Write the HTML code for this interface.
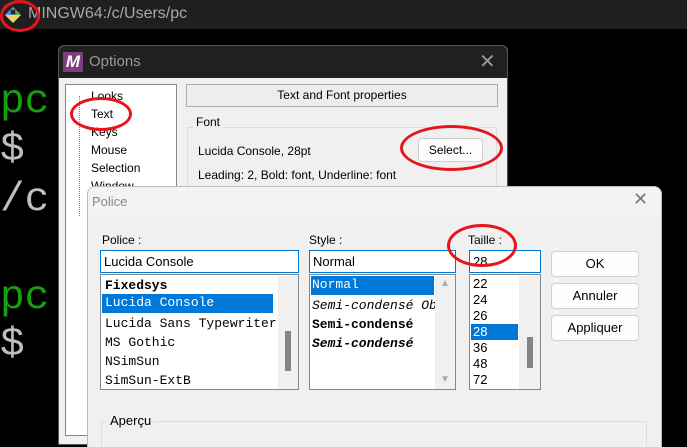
<!DOCTYPE html>
<html><head><meta charset="utf-8"><style>
*{margin:0;padding:0;box-sizing:border-box}
html,body{width:687px;height:447px;overflow:hidden}
body{background:#000;position:relative;font-family:"Liberation Sans",sans-serif;font-size:12px;color:#000}
.a{position:absolute}
.mono{font-family:"Liberation Mono",monospace}
.term{color:#bfbfbf;font-family:"Liberation Mono",monospace;font-size:41px;line-height:1}
.g{color:#13a10e}
.btn{position:absolute;background:#fdfdfd;border:1px solid #d0d0d0;border-radius:4px;text-align:center;font-size:13px}
.box{position:absolute;background:#fff;border:1px solid #828790;overflow:hidden}
.sel{background:#0078d7;color:#fff}
.oval{position:absolute;border:3px solid #e8141b;border-radius:50%}
.li{position:absolute;left:4px;white-space:nowrap}
</style></head><body>
<div class="a" style="left:0;top:0;width:687px;height:29px;background:#1f1f1f"></div>
<svg class="a" style="left:4px;top:6px" width="18" height="18" viewBox="0 0 18 18">
<path d="M9 1L17 9 9 17 1 9Z" fill="#f2d36b"/><path d="M9 1L17 9 9 9Z" fill="#5aa85a"/><path d="M1 9L9 1 9 9Z" fill="#5b8fd6"/><path d="M7 4L11 8M11 4L7 8" stroke="#222" stroke-width="2"/></svg>
<div class="a" style="left:28px;top:5px;color:#a8a8a8;font-size:16px">MINGW64:/c/Users/pc</div>
<div class="a term g" style="left:0px;top:82px">pc</div>
<div class="a term" style="left:0px;top:130px">$</div>
<div class="a term" style="left:0px;top:180px">/c</div>
<div class="a term g" style="left:0px;top:278px">pc</div>
<div class="a term" style="left:0px;top:325px">$</div>

<!-- Options dialog -->
<div class="a" style="left:58px;top:45px;width:450px;height:400px;background:#f0f0f0;border:1px solid #555;border-radius:6px 6px 0 0;overflow:hidden">
 <div class="a" style="left:0;top:0;width:450px;height:32px;background:#202020"></div>
 <div class="a" style="left:4px;top:6px;width:20px;height:20px;background:#7b3f7e;color:#fff;font-weight:bold;font-style:italic;font-size:17px;text-align:center;line-height:20px">M</div>
 <div class="a" style="left:30px;top:7px;color:#9a9a9a;font-size:15px">Options</div>
 <div class="a" style="left:420px;top:3px;color:#999;font-size:20px">✕</div>
 <div class="a" style="left:6px;top:38px;width:112px;height:352px;background:#fff;border:1px solid #828790"></div>
 <div class="a" style="left:20px;top:50px;height:120px;border-left:1px dotted #888"></div>
 <div class="a" style="left:32px;top:41px;font-size:12px;line-height:18px">Looks<br>Text<br>Keys<br>Mouse<br>Selection<br>Window</div>
 <div class="a" style="left:127px;top:38px;width:312px;height:23px;border:1px solid #adadad;background:#ededed;text-align:center;line-height:21px;font-size:12px">Text and Font properties</div>
 <div class="a" style="left:128px;top:81px;width:310px;height:200px;border:1px solid #dcdcdc"></div>
 <div class="a" style="left:134px;top:69px;background:#f0f0f0;padding:0 3px;font-size:12px">Font</div>
 <div class="a" style="left:139px;top:98px;font-size:12px">Lucida Console, 28pt</div>
 <div class="btn" style="left:359px;top:92px;width:65px;height:24px;line-height:22px;font-size:12px">Select...</div>
 <div class="a" style="left:139px;top:122px;font-size:12px">Leading: 2, Bold: font, Underline: font</div>
</div>

<!-- Police dialog -->
<div class="a" style="left:87px;top:186px;width:575px;height:261px;background:#f0f0f0;border:1px solid #bbb;border-bottom:none;border-radius:8px 8px 0 0;overflow:hidden">
 <div class="a" style="left:0;top:0;width:575px;height:30px;background:#f3f3f3"></div>
 <div class="a" style="left:4px;top:7px;color:#888;font-size:13px">Police</div>
 <div class="a" style="left:545px;top:2px;color:#777;font-size:18px">✕</div>
 <div class="a" style="left:14px;top:46px;font-size:12px">Police :</div>
 <div class="a" style="left:221px;top:46px;font-size:12px">Style :</div>
 <div class="a" style="left:380px;top:46px;font-size:12px">Taille :</div>

 <div class="box" style="left:12px;top:63px;width:199px;height:23px;border-color:#0078d7"><span style="position:absolute;left:3px;top:3px;font-size:13px">Lucida Console</span></div>
 <div class="box" style="left:221px;top:63px;width:147px;height:23px;border-color:#0078d7"><span style="position:absolute;left:3px;top:3px;font-size:13px">Normal</span></div>
 <div class="box" style="left:381px;top:63px;width:72px;height:23px;border-color:#0078d7"><span style="position:absolute;left:3px;top:3px;font-size:13px">28</span></div>

 <div class="box mono" style="left:12px;top:87px;width:199px;height:116px;font-size:13px">
  <div class="li" style="top:3px;font-weight:bold">Fixedsys</div>
  <div class="li sel" style="left:1px;top:19px;width:171px;height:19px;padding:1px 3px">Lucida Console</div>
  <div class="li" style="top:41px">Lucida Sans Typewriter</div>
  <div class="li" style="top:60px">MS Gothic</div>
  <div class="li" style="top:79px">NSimSun</div>
  <div class="li" style="top:98px">SimSun-ExtB</div>
  <div class="a" style="right:0;top:1px;width:20px;height:113px;background:#f0f0f0"></div>
  <div class="a" style="right:7px;top:56px;width:6px;height:40px;background:#858585"></div>
 </div>
 <div class="box mono" style="left:221px;top:87px;width:147px;height:116px;font-size:13px">
  <div class="li sel" style="left:1px;top:1px;width:123px;height:19px;padding:1px 1px">Normal</div>
  <div class="li" style="left:2px;top:23px;font-style:italic">Semi-condensé Oblique</div>
  <div class="li" style="left:2px;top:42px;font-weight:bold">Semi-condensé</div>
  <div class="li" style="left:2px;top:61px;font-weight:bold;font-style:italic">Semi-condensé</div>
  <div class="a" style="right:0;top:1px;width:20px;height:113px;background:#f0f0f0;color:#aaa;font-size:10px;text-align:center;padding-top:2px;font-family:'Liberation Sans'">▲<div style="position:absolute;bottom:4px;width:20px">▼</div></div>
 </div>
 <div class="box" style="left:381px;top:87px;width:72px;height:116px;font-size:13px;line-height:16px">
  <div class="a" style="left:3px;top:1px">22<br>24<br>26</div>
  <div class="a sel" style="left:1px;top:49px;width:47px;height:16px;padding-left:2px">28</div>
  <div class="a" style="left:3px;top:65px">36<br>48<br>72</div>
  <div class="a" style="right:0;top:1px;width:21px;height:113px;background:#f0f0f0"></div>
  <div class="a" style="right:7px;top:62px;width:6px;height:31px;background:#858585"></div>
 </div>

 <div class="btn" style="left:463px;top:64px;width:88px;height:26px;line-height:24px">OK</div>
 <div class="btn" style="left:463px;top:96px;width:88px;height:26px;line-height:24px">Annuler</div>
 <div class="btn" style="left:463px;top:128px;width:88px;height:26px;line-height:24px">Appliquer</div>

 <div class="a" style="left:13px;top:234px;width:546px;height:27px;border:1px solid #dcdcdc;border-bottom:none"></div>
 <div class="a" style="left:19px;top:226px;background:#f0f0f0;padding:0 3px;font-size:13px">Aperçu</div>
</div>

<div class="oval" style="left:0px;top:0px;width:40px;height:32px"></div>
<div class="oval" style="left:70px;top:97px;width:62px;height:34px"></div>
<div class="oval" style="left:400px;top:125px;width:103px;height:46px"></div>
<div class="oval" style="left:447px;top:224px;width:70px;height:43px"></div>
</body></html>
